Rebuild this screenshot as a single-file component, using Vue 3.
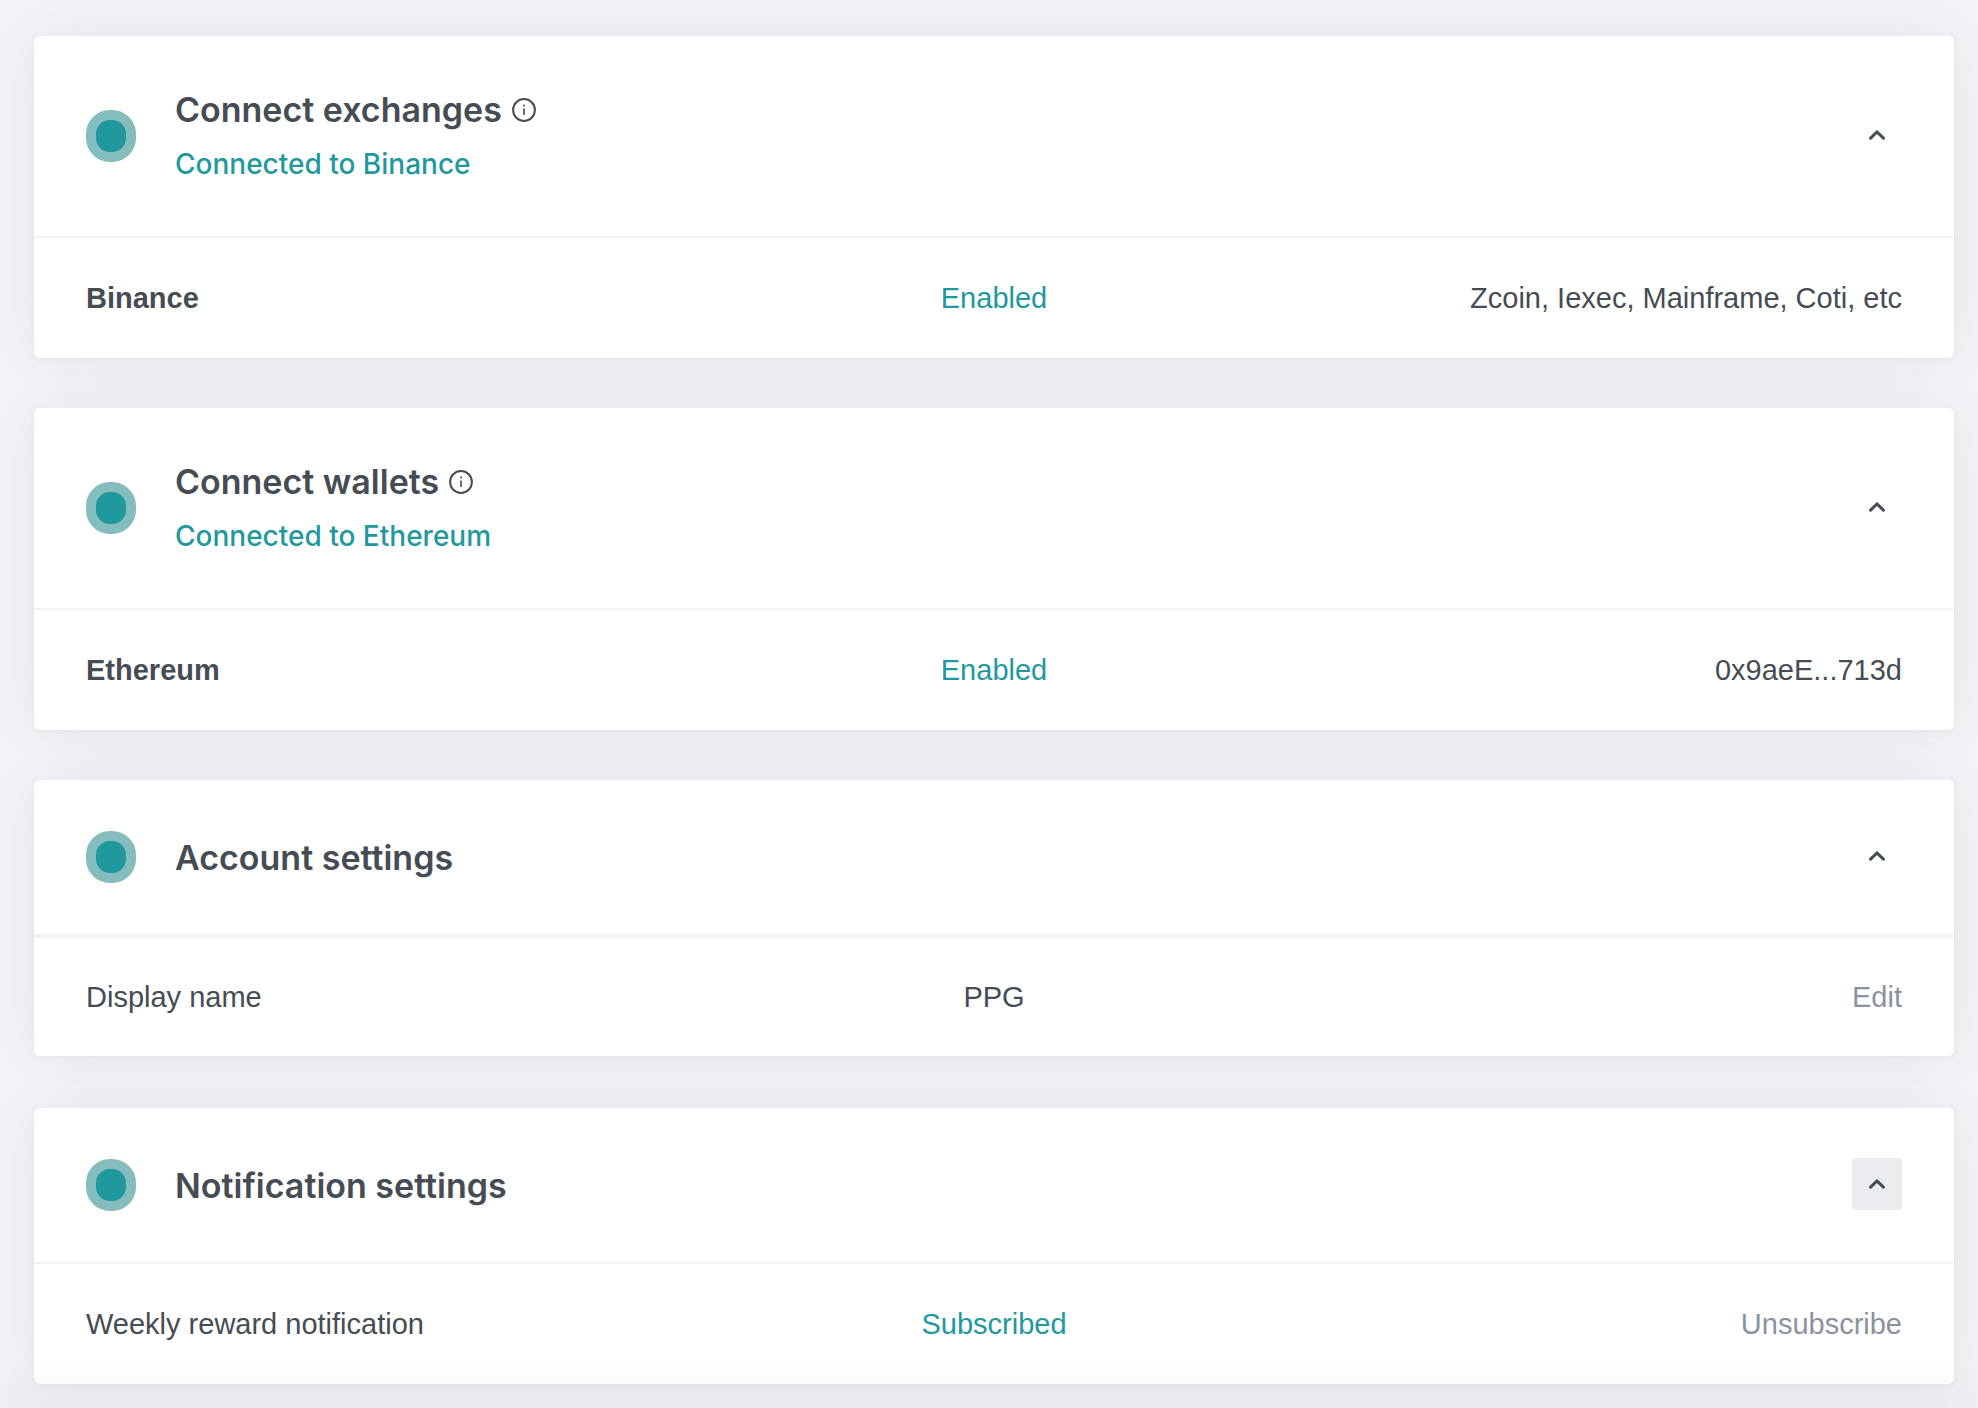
<script setup>
import { ref } from 'vue'

const cards = ref([
  {
    id: 'exchanges',
    title: 'Connect exchanges',
    info: true,
    status: 'Connected to Binance',
    row: { label: 'Binance', strong: true, value: 'Enabled', active: true, detail: 'Zcoin, Iexec, Mainframe, Coti, etc' },
    open: true
  },
  {
    id: 'wallets',
    title: 'Connect wallets',
    info: true,
    status: 'Connected to Ethereum',
    row: { label: 'Ethereum', strong: true, value: 'Enabled', active: true, detail: '0x9aeE...713d' },
    open: true
  },
  {
    id: 'account',
    title: 'Account settings',
    divided: true,
    row: { label: 'Display name', value: 'PPG', action: 'Edit' },
    open: true
  },
  {
    id: 'notifications',
    title: 'Notification settings',
    highlighted: true,
    row: { label: 'Weekly reward notification', value: 'Subscribed', active: true, action: 'Unsubscribe' },
    open: true
  }
])
</script>

<template>
  <main class="settings">
    <section
      v-for="card in cards"
      :key="card.id"
      class="card"
      :class="{ divided: card.divided }"
      :aria-labelledby="card.id"
    >
      <header class="card-header" :class="{ tall: card.status }">
        <span class="dot" aria-hidden="true"></span>
        <div class="heading">
          <h2 :id="card.id" class="title">
            {{ card.title }}
            <svg v-if="card.info" class="info" viewBox="0 0 24 24" fill="none" aria-hidden="true">
              <circle cx="12" cy="12" r="10.9" stroke="currentColor" stroke-width="2" />
              <path d="M12 10.500v6.500" stroke="currentColor" stroke-width="1.600" />
              <circle cx="12" cy="7.6" r="1" fill="currentColor" />
            </svg>
          </h2>
          <p v-if="card.status" class="status">{{ card.status }}</p>
        </div>
        <button
          type="button"
          class="toggle"
          :class="{ highlighted: card.highlighted }"
          :aria-expanded="card.open"
          :aria-label="`Toggle ${card.title}`"
          @click="card.open = !card.open"
        >
          <svg class="chevron" :class="{ closed: !card.open }" viewBox="0 0 16 10" fill="none" aria-hidden="true">
            <path d="M1.6 8.2 8 2l6.400 6.200" stroke="currentColor" stroke-width="3" stroke-linecap="round" />
          </svg>
        </button>
      </header>
      <div v-if="card.open" class="row">
        <span class="label" :class="{ strong: card.row.strong }">{{ card.row.label }}</span>
        <span class="value" :class="{ active: card.row.active }">{{ card.row.value }}</span>
        <button v-if="card.row.action" type="button" class="action">{{ card.row.action }}</button>
        <span v-else class="detail">{{ card.row.detail }}</span>
      </div>
    </section>
  </main>
</template>

<style>
body {
  margin: 0;
  background: #f1f3f7;
}
</style>

<style scoped>
.settings {
  display: flex;
  flex-direction: column;
  gap: 50px;
  padding: 36px 24px 24px 34px;
  color: #464c54;
  font-family: "Liberation Sans", Arial, sans-serif;
  font-size: 29px;
  line-height: 40px;
}

/* Soft shade along the lower edge of the window */
.settings::after {
  content: "";
  position: fixed;
  right: 0;
  bottom: 0;
  left: 0;
  box-shadow: 0 0 50px 10px rgba(0, 0, 0, 0.08);
  pointer-events: none;
}

.card {
  background: #fff;
  border-radius: 6px;
  box-shadow: 0 2px 8px rgba(0, 0, 0, 0.04), 0 0 60px rgba(0, 0, 0, 0.05);
}

.card-header {
  display: flex;
  align-items: center;
  box-sizing: border-box;
  min-height: 156px;
  padding: 0 52px;
  border-bottom: 2px solid #f1f2f7;
}

.card-header.tall {
  min-height: 202px;
}

.dot {
  flex: none;
  box-sizing: border-box;
  width: 50px;
  height: 52px;
  border: 10px solid #85bcbd;
  border-radius: 24px;
  background: #1f999d;
}

.heading {
  display: flex;
  flex: 1;
  flex-direction: column;
  gap: 10px;
  margin-left: 39px;
  padding-top: 2px;
  font-family: Inter, "Liberation Sans", sans-serif;
  line-height: 44px;
}

.title {
  display: flex;
  align-items: center;
  gap: 10px;
  margin: 0;
  font-size: 34px;
  font-weight: 600;
}

.info {
  width: 24px;
  height: 24px;
}

.status {
  margin: 0;
  color: #1f999d;
  font-size: 28px;
  font-weight: 500;
}

.toggle {
  display: flex;
  align-items: center;
  justify-content: center;
  width: 50px;
  height: 52px;
  margin: 0 0 2px;
  padding: 0;
  border: 0;
  border-radius: 3px;
  background: transparent;
  color: inherit;
  cursor: pointer;
}

.toggle.highlighted,
.toggle:hover {
  background: #ebebf0;
}

.chevron {
  width: 16px;
  height: 10px;
}

.chevron.closed {
  transform: rotate(180deg);
}

.row {
  display: grid;
  grid-template-columns: 1fr auto 1fr;
  align-items: center;
  box-sizing: border-box;
  min-height: 120px;
  padding: 0 52px;
}

.divided {
  margin-bottom: 2px;
}

.divided .row {
  border-top: 2px solid #f1f2f7;
}

.strong {
  font-weight: 700;
}

.active {
  color: #1f999d;
}

.detail,
.action {
  justify-self: end;
}

.action {
  padding: 0;
  border: 0;
  background: none;
  color: #8b929e;
  font: inherit;
  cursor: pointer;
}
</style>
